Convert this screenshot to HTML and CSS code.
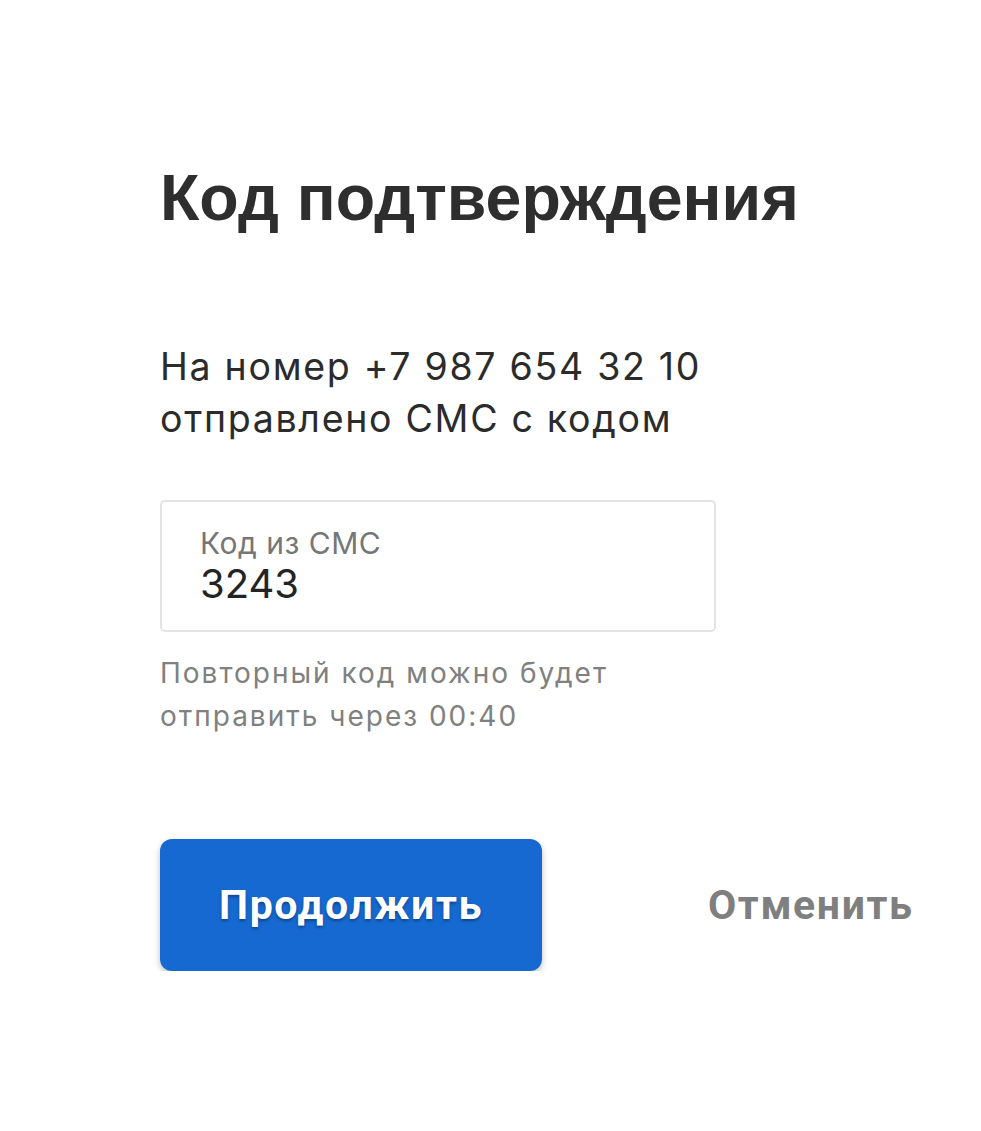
FILE: index.html
```html
<!DOCTYPE html>
<html lang="ru">
<head>
<meta charset="utf-8">
<link rel="stylesheet" href="styles.css">
</head>
<body>
<main class="page">
  <h1 class="title">Код подтверждения</h1>
  <p class="lead">На номер +7 987 654 32 10<br>отправлено СМС с кодом</p>
  <div class="field">
    <div class="field-label">Код из СМС</div>
    <div class="field-value">3243</div>
  </div>
  <p class="hint">Повторный код можно будет<br>отправить через 00:40</p>
  <div class="actions">
    <button class="btn-primary">Продолжить</button>
    <button class="btn-link">Отменить</button>
  </div>
</main>
</body>
</html>
```
FILE: styles.css
```css
* { box-sizing: border-box; }
html, body { margin: 0; padding: 0; background: #fff; }
.page {
  padding: 158px 0 0 160px;
  font-family: Inter, "Noto Sans", sans-serif;
  color: #2b2b2b;
}
.title {
  margin: 0;
  font-family: "Liberation Sans", Arial, sans-serif;
  font-weight: 700;
  font-size: 64.5px;
  line-height: 80px;
  color: #2e2e2e;
}
.lead {
  margin: 103px 0 0;
  font-size: 37.5px;
  line-height: 52px;
  letter-spacing: 1.7px;
  color: #2b2b2b;
}
.field {
  margin-top: 55px;
  width: 556px;
  height: 132px;
  border: 2px solid #e3e3e3;
  border-radius: 5px;
  padding: 23px 38px 0;
}
.field-label {
  font-size: 30px;
  line-height: 36px;
  letter-spacing: 0.5px;
  color: #767676;
}
.field-value {
  font-size: 40px;
  line-height: 46px;
  color: #232323;
}
.hint {
  margin: 20px 0 0;
  font-size: 28px;
  line-height: 43px;
  letter-spacing: 2px;
  color: #808080;
}
.actions {
  margin-top: 101px;
  display: flex;
  align-items: center;
}
.btn-primary {
  width: 382px;
  height: 132px;
  border: 0;
  border-radius: 12px;
  background: #1669d1;
  box-shadow: 0 3px 6px rgba(0,0,0,0.25);
  font-family: Roboto, sans-serif;
  font-weight: 700;
  font-size: 41px;
  letter-spacing: 1.6px;
  color: #fff;
  text-shadow: 0 2px 3px rgba(0,0,0,0.35);
  padding: 0;
}
.btn-link {
  margin-left: 166px;
  border: 0;
  background: none;
  padding: 0;
  font-family: Roboto, sans-serif;
  font-weight: 700;
  font-size: 41px;
  letter-spacing: 1.6px;
  color: #7f7f7f;
}
```
